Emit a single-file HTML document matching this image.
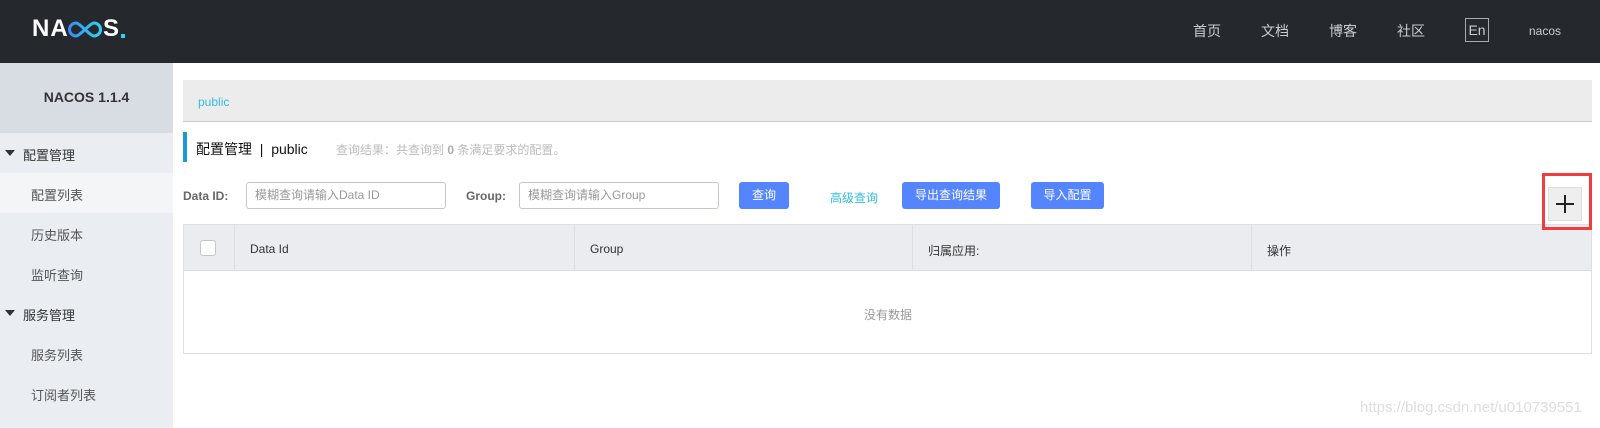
<!DOCTYPE html>
<html><head><meta charset="utf-8"><style>
*{margin:0;padding:0;box-sizing:border-box}
body{width:1600px;height:428px;overflow:hidden;background:#fff;font-family:"Liberation Sans","Noto Sans CJK SC",sans-serif;position:relative;color:#333}
.a{position:absolute}
.hdr{left:0;top:0;width:1600px;height:63px;background:#25292e}
.nav{color:#ccc;font-size:14px;top:21px}
.side{left:0;top:63px;width:173px;height:365px;background:#eaedf1}
.si{left:31px;font-size:13px;color:#555}
.sh{left:23px;font-size:13px;color:#333}
.tri{left:5px;width:0;height:0;border-left:5px solid transparent;border-right:5px solid transparent;border-top:6px solid #333}
.inp{height:27px;border:1px solid #c4c6cf;border-radius:3px;font-size:12px;color:#999;padding:0 8px;line-height:25px;background:#fff}
.btn{height:27px;background:#5584ff;color:#fff;font-size:12px;border-radius:3px;text-align:center;line-height:27px}
.lbl{font-size:12px;font-weight:bold;color:#666;top:189px}
.th{font-size:12px;color:#333;top:242px}
.vl{width:1px;top:224px;height:47px;background:#dcdee3}
</style></head><body>
<div class="a hdr"></div>
<div class="a" style="left:32px;top:15px;color:#fff;font-size:24px;font-weight:bold;letter-spacing:1px">NA</div>
<svg class="a" style="left:67px;top:21px" width="36" height="17" viewBox="0 0 36 17"><defs><linearGradient id="g" x1="0" x2="1"><stop offset="0" stop-color="#3a8df5"/><stop offset="1" stop-color="#2ed3f0"/></linearGradient></defs><path d="M9 2 A6.5 6.5 0 1 0 9 15 C13 15 23 2 27 2 A6.5 6.5 0 1 1 27 15 C23 15 13 2 9 2Z" fill="none" stroke="url(#g)" stroke-width="3"/></svg>
<div class="a" style="left:103px;top:15px;color:#fff;font-size:24px;font-weight:bold">S</div>
<div class="a" style="left:121px;top:34px;width:4px;height:4px;background:#2ed3f0"></div>
<div class="a nav" style="left:1193px">首页</div>
<div class="a nav" style="left:1261px">文档</div>
<div class="a nav" style="left:1329px">博客</div>
<div class="a nav" style="left:1397px">社区</div>
<div class="a" style="left:1465px;top:18px;width:24px;height:24px;border:1px solid #aaa;color:#ccc;font-size:14px;text-align:center;line-height:22px">En</div>
<div class="a" style="left:1529px;top:24px;color:#ccc;font-size:12px">nacos</div>

<div class="a side"></div>
<div class="a" style="left:0;top:63px;width:173px;height:70px;background:#d8dde4"></div>
<div class="a" style="left:0;top:89px;width:173px;text-align:center;font-size:14px;font-weight:bold;color:#333">NACOS 1.1.4</div>
<div class="a" style="left:0;top:173px;width:173px;height:40px;background:#f4f5f7"></div>
<div class="a tri" style="top:150px"></div><div class="a sh" style="top:145px">配置管理</div>
<div class="a si" style="top:185px">配置列表</div>
<div class="a si" style="top:225px">历史版本</div>
<div class="a si" style="top:265px">监听查询</div>
<div class="a tri" style="top:310px"></div><div class="a sh" style="top:305px">服务管理</div>
<div class="a si" style="top:345px">服务列表</div>
<div class="a si" style="top:385px">订阅者列表</div>

<div class="a" style="left:183px;top:80px;width:1409px;height:42px;background:#ececec;border-bottom:1px solid #ccc"></div>
<div class="a" style="left:198px;top:95px;font-size:12px;color:#33bde0">public</div>
<div class="a" style="left:183px;top:132px;width:4px;height:30px;background:#1a9ad6"></div>
<div class="a" style="left:196px;top:139px;font-size:14px;color:#111">配置管理 &nbsp;| &nbsp;public</div>
<div class="a" style="left:336px;top:141px;font-size:12px;color:#bbb">查询结果：共查询到 <b style="color:#aaa">0</b> 条满足要求的配置。</div>

<div class="a lbl" style="left:183px">Data ID:</div>
<div class="a inp" style="left:246px;top:182px;width:200px">模糊查询请输入Data ID</div>
<div class="a lbl" style="left:466px">Group:</div>
<div class="a inp" style="left:519px;top:182px;width:200px">模糊查询请输入Group</div>
<div class="a btn" style="left:739px;top:182px;width:50px">查询</div>
<div class="a" style="left:830px;top:189px;font-size:12px;color:#33bde0">高级查询</div>
<div class="a btn" style="left:902px;top:182px;width:98px">导出查询结果</div>
<div class="a btn" style="left:1031px;top:182px;width:73px">导入配置</div>

<div class="a" style="left:183px;top:224px;width:1409px;height:130px;border:1px solid #dcdee3"></div>
<div class="a" style="left:184px;top:225px;width:1407px;height:46px;background:#ebecf0;border-bottom:1px solid #dcdee3"></div>
<div class="a vl" style="left:234px"></div><div class="a vl" style="left:574px"></div><div class="a vl" style="left:912px"></div><div class="a vl" style="left:1251px"></div>
<div class="a" style="left:200px;top:240px;width:16px;height:16px;background:#fff;border:1px solid #c4c6cf;border-radius:3px"></div>
<div class="a th" style="left:250px">Data Id</div>
<div class="a th" style="left:590px">Group</div>
<div class="a th" style="left:928px">归属应用:</div>
<div class="a th" style="left:1267px">操作</div>
<div class="a" style="left:864px;top:306px;font-size:12px;color:#999">没有数据</div>

<div class="a" style="left:1542px;top:173px;width:50px;height:57px;border:3px solid #f03c3c"></div>
<div class="a" style="left:1548px;top:187px;width:34px;height:34px;background:#eee;border:1px solid #ddd"></div>
<div class="a" style="left:1564px;top:195px;width:2px;height:18px;background:#222"></div>
<div class="a" style="left:1556px;top:203px;width:18px;height:2px;background:#222"></div>

<div class="a" style="left:1360px;top:399px;font-size:15px;color:#ddd">https://blog.csdn.net/u010739551</div>
</body></html>
